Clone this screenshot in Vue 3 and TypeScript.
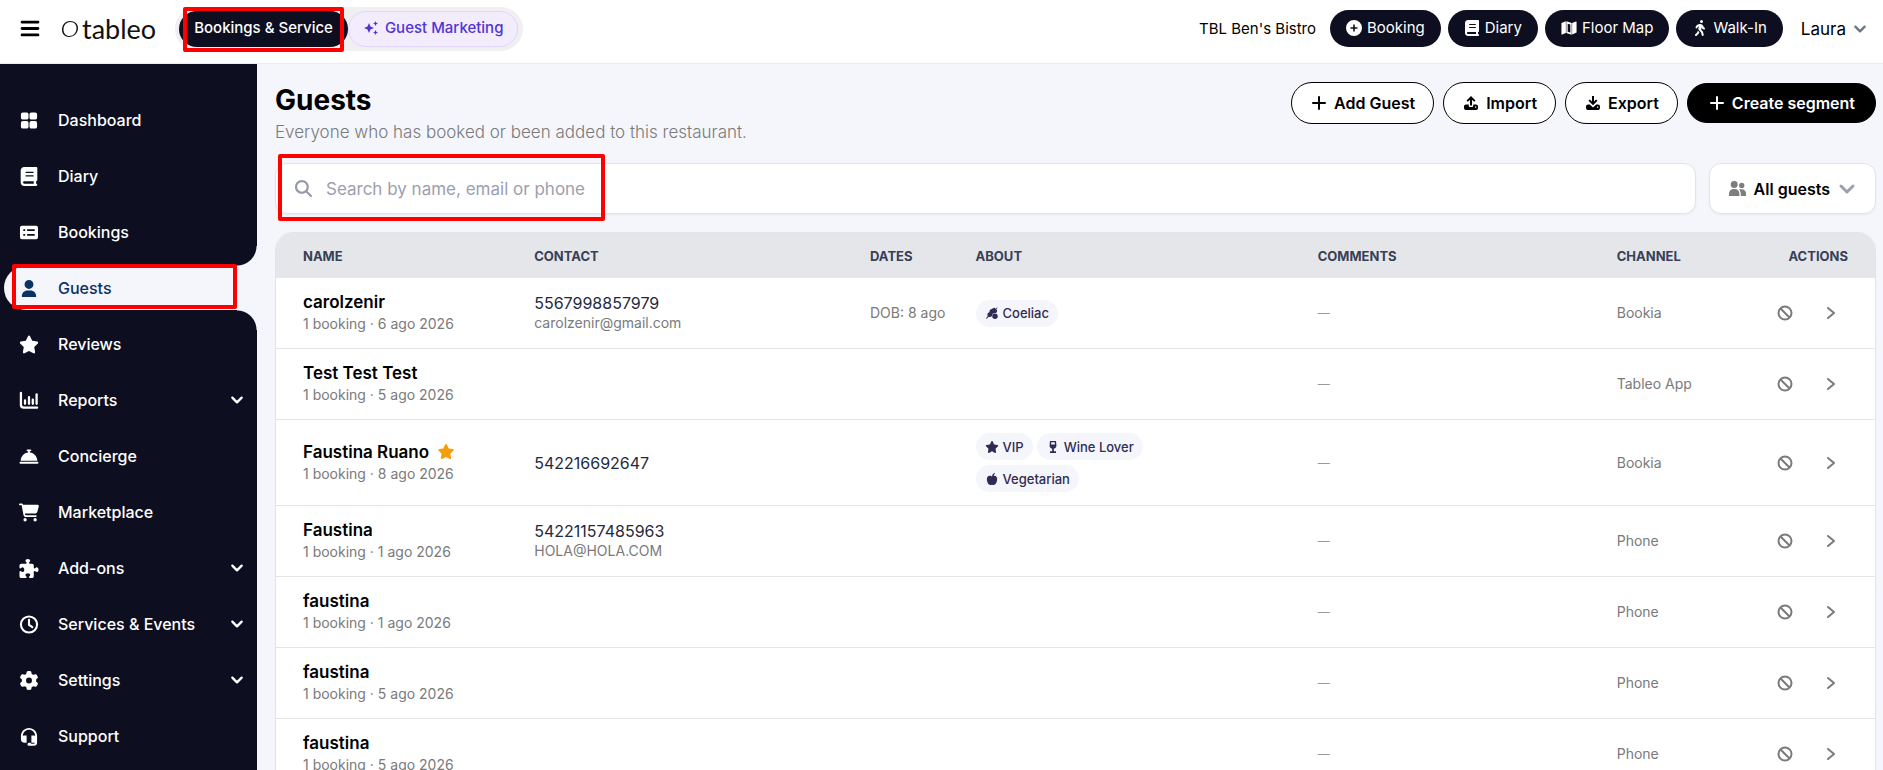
<script setup lang="ts">
import { h, ref, type FunctionalComponent } from 'vue'

interface Shape {
  box: string
  d: string
  stroke?: number
}

interface NavItem {
  label: string
  icon: string
  active?: boolean
  expandable?: boolean
}

interface Tag {
  label: string
  icon: string
}

interface Guest {
  name: string
  visit: string
  vip?: boolean
  phone?: string
  email?: string
  dates?: string
  tags?: Tag[]
  channel: string
}

const icons: Record<string, Shape> = {
  menu: { box: '0 0 18 16', d: 'M1.500 2h15M1.500 8h15M1.500 14h15', stroke: 2.6 },
  grid: {
    box: '0 0 20 20',
    d: 'M3.500 1.500h4a2 2 0 0 1 2 2v3.500a2 2 0 0 1-2 2h-4a2 2 0 0 1-2-2v-3.500a2 2 0 0 1 2-2zM12.500 1.500h4a2 2 0 0 1 2 2v3.500a2 2 0 0 1-2 2h-4a2 2 0 0 1-2-2v-3.500a2 2 0 0 1 2-2zM3.500 10.500h4a2 2 0 0 1 2 2v4a2 2 0 0 1-2 2h-4a2 2 0 0 1-2-2v-4a2 2 0 0 1 2-2zM12.500 10.500h4a2 2 0 0 1 2 2v4a2 2 0 0 1-2 2h-4a2 2 0 0 1-2-2v-4a2 2 0 0 1 2-2z',
  },
  book: {
    box: '0 0 448 512',
    d: 'M96 0C43 0 0 43 0 96V416c0 53 43 96 96 96H384h32c17.700 0 32-14.300 32-32s-14.300-32-32-32V384c17.700 0 32-14.300 32-32V32c0-17.700-14.300-32-32-32H384 96zm0 384H352v64H96c-17.700 0-32-14.300-32-32s14.300-32 32-32zm32-240c0-8.800 7.200-16 16-16H336c8.800 0 16 7.200 16 16s-7.200 16-16 16H144c-8.800 0-16-7.200-16-16zm16 80H336c8.800 0 16 7.200 16 16s-7.200 16-16 16H144c-8.800 0-16-7.200-16-16s7.200-16 16-16z',
  },
  list: {
    box: '0 0 20 20',
    d: 'M2.500 3h15a2 2 0 0 1 2 2v10a2 2 0 0 1-2 2h-15a2 2 0 0 1-2-2V5a2 2 0 0 1 2-2zM4 6.500v2h2v-2zM8 6.500v2h8v-2zM4 11.500v2h2v-2zM8 11.500v2h8v-2z',
  },
  user: { box: '0 0 20 20', d: 'M10 1a4.700 4.700 0 1 1 0 9.400a4.700 4.700 0 0 1 0-9.400zM2.500 19v-1c0-3.500 2.500-6 6-6h3c3.500 0 6 2.500 6 6v1z' },
  star: {
    box: '0 0 576 512',
    d: 'M316.900 18C311.600 7 300.400 0 288.100 0s-23.400 7-28.800 18L195 150.300 51.400 171.500c-12 1.800-22 10.200-25.700 21.700s-.7 24.200 7.900 32.700L137.800 329 113.200 474.700c-2 12 3 24.200 12.900 31.300s23 8 33.800 2.300l128.300-68.500 128.300 68.500c10.800 5.700 23.900 4.900 33.800-2.300s14.900-19.300 12.900-31.300L438.500 329 542.700 225.900c8.600-8.500 11.700-21.200 7.900-32.700s-13.700-19.900-25.700-21.700L381.200 150.300 316.900 18z',
  },
  chart: { box: '0 0 20 20', d: 'M1.500 2v12.500a3 3 0 0 0 3 3h14M5.800 13.500V10M10 13.500V6.500M14 13.500V9M18 13.500V3.500', stroke: 2.4 },
  bell: {
    box: '0 0 512 512',
    d: 'M216 64c-13.300 0-24 10.700-24 24s10.700 24 24 24h16v33.300C119.600 157.200 32 252.400 32 368H480c0-115.600-87.600-210.800-200-222.700V112h16c13.300 0 24-10.700 24-24s-10.700-24-24-24H216zM24 400c-13.300 0-24 10.700-24 24s10.700 24 24 24H488c13.300 0 24-10.700 24-24s-10.700-24-24-24H24z',
  },
  cart: {
    box: '0 0 576 512',
    d: 'M0 24C0 10.700 10.700 0 24 0H69.500c22 0 41.500 12.800 50.600 32h411c26.300 0 45.500 25 38.600 50.400l-41 152.300c-8.500 31.400-37 53.300-69.500 53.300H170.700l5.400 28.500c2.200 11.300 12.100 19.500 23.600 19.500H488c13.300 0 24 10.700 24 24s-10.700 24-24 24H199.700c-34.600 0-64.300-24.600-70.700-58.500L77.400 54.500c-.7-3.800-4-6.500-7.900-6.500H24C10.700 48 0 37.300 0 24zM128 464a48 48 0 1 1 96 0 48 48 0 1 1 -96 0zm336-48a48 48 0 1 1 0 96 48 48 0 1 1 0-96z',
  },
  puzzle: {
    box: '0 0 512 512',
    d: 'M192 104.800c0-9.200-5.800-17.300-13.200-22.800C167.200 73.300 160 61.300 160 48c0-26.500 28.700-48 64-48s64 21.500 64 48c0 13.300-7.200 25.300-18.800 34c-7.400 5.500-13.200 13.600-13.200 22.800c0 12.800 10.400 23.200 23.200 23.200H336c26.500 0 48 21.500 48 48v56.800c0 12.800 10.400 23.200 23.200 23.200c9.200 0 17.300-5.800 22.800-13.200c8.700-11.600 20.700-18.800 34-18.800c26.500 0 48 28.700 48 64s-21.500 64-48 64c-13.300 0-25.300-7.200-34-18.800c-5.500-7.400-13.600-13.200-22.800-13.200c-12.800 0-23.200 10.400-23.200 23.200V464c0 26.500-21.500 48-48 48H279.200c-12.800 0-23.200-10.400-23.200-23.200c0-9.200 5.800-17.300 13.200-22.800c11.600-8.700 18.800-20.700 18.800-34c0-26.500-28.700-48-64-48s-64 21.500-64 48c0 13.300 7.200 25.300 18.800 34c7.400 5.500 13.200 13.600 13.200 22.800c0 12.800-10.400 23.200-23.200 23.200H48c-26.500 0-48-21.500-48-48V343.200C0 330.400 10.400 320 23.200 320c9.200 0 17.300 5.800 22.800 13.200C54.700 344.800 66.700 352 80 352c26.500 0 48-28.700 48-64s-21.500-64-48-64c-13.300 0-25.300 7.200-34 18.800C40.500 250.200 32.400 256 23.200 256C10.400 256 0 245.600 0 232.800V176c0-26.500 21.500-48 48-48H168.800c12.800 0 23.200-10.400 23.200-23.200z',
  },
  clock: { box: '0 0 20 20', d: 'M10 1.500a8.500 8.500 0 1 1 0 17a8.500 8.500 0 0 1 0-17zM10 5v5.500l3.500 2.300', stroke: 2.2 },
  gear: {
    box: '0 0 512 512',
    d: 'M495.900 166.600c3.200 8.700 .5 18.400-6.400 24.600l-43.300 39.400c1.100 8.300 1.700 16.800 1.700 25.400s-.6 17.100-1.700 25.400l43.300 39.400c6.900 6.200 9.600 15.900 6.400 24.600c-4.400 11.900-9.700 23.300-15.800 34.300l-4.700 8.100c-6.600 11-14 21.400-22.100 31.200c-5.900 7.200-15.700 9.600-24.500 6.800l-55.700-17.700c-13.400 10.300-28.200 18.900-44 25.400l-12.500 57.100c-2 9.100-9 16.300-18.200 17.800c-13.800 2.300-28 3.500-42.500 3.500s-28.700-1.200-42.500-3.500c-9.200-1.500-16.200-8.700-18.200-17.800l-12.500-57.100c-15.800-6.500-30.600-15.100-44-25.400L83.100 425.900c-8.800 2.800-18.600 .3-24.500-6.800c-8.100-9.800-15.500-20.200-22.100-31.200l-4.700-8.100c-6.100-11-11.400-22.400-15.800-34.300c-3.200-8.700-.5-18.400 6.400-24.600l43.300-39.400C64.600 273.100 64 264.600 64 256s.6-17.100 1.700-25.400L22.400 191.200c-6.900-6.200-9.600-15.900-6.400-24.600c4.400-11.900 9.700-23.300 15.800-34.300l4.700-8.100c6.600-11 14-21.400 22.100-31.200c5.900-7.200 15.700-9.600 24.500-6.800l55.700 17.700c13.400-10.300 28.200-18.900 44-25.400l12.500-57.100c2-9.100 9-16.300 18.200-17.800C227.300 1.200 241.500 0 256 0s28.700 1.200 42.500 3.500c9.200 1.500 16.200 8.700 18.200 17.800l12.500 57.100c15.800 6.500 30.600 15.100 44 25.400l55.700-17.700c8.800-2.800 18.600-.3 24.500 6.800c8.100 9.800 15.500 20.200 22.100 31.200l4.700 8.100c6.100 11 11.400 22.400 15.800 34.300zM256 336a80 80 0 1 0 0-160 80 80 0 1 0 0 160z',
  },
  headset: {
    box: '0 0 20 20',
    d: 'M10 1C5.300 1 1.500 4.800 1.500 9.500v3A4 4 0 0 0 5.500 16.500h2V9h-2.500q-.8 0-1.500.3C3.600 5.800 6.500 3 10 3s6.400 2.800 6.500 6.300q-.7-.3-1.500-.3h-2.500v7.500h3.800a1.600 1.600 0 0 1-1.500 1h-2.500a1.300 1.300 0 0 0-1.300-1h-1a1.500 1.500 0 0 0 0 3.200h5a3.500 3.500 0 0 0 3.500-3.500V9.500C18.500 4.800 14.700 1 10 1z',
  },
  down: { box: '0 0 12 12', d: 'M2 4l4 4 4-4', stroke: 2 },
  right: { box: '0 0 12 16', d: 'M3 3l6 5-6 5', stroke: 2 },
  sparkles: {
    box: '0 0 16 16',
    d: 'M6 3l1.500 3.500L11 8 7.500 9.500 6 13 4.500 9.500 1 8l3.500-1.500zM12.500 1l.8 1.700L15 3.500l-1.700.8-.8 1.700-.8-1.700L10 3.500l1.700-.8zM12.500 10l.8 1.700 1.700.8-1.700.8-.8 1.700-.8-1.700-1.700-.8 1.700-.8z',
  },
  plusCircle: { box: '0 0 16 16', d: 'M8 0a8 8 0 1 1 0 16A8 8 0 0 1 8 0zM7.200 4.500v2.700H4.500v1.600h2.700v2.700h1.600V8.800h2.700V7.200H8.800V4.500z' },
  map: { box: '0 0 18 16', d: 'M.5 2.500L5.500.5V13.500L1.300 15.300a.6.600 0 0 1-.8-.6zM6 .5l6 2V15.500l-6-2zM12.500 2.500l4.200-1.800a.6.600 0 0 1 .8.600V13l-5 2.300zM7.500 3.200v9l3 1v-9z' },
  walk: {
    box: '0 0 320 512',
    d: 'M160 48a48 48 0 1 1 96 0 48 48 0 1 1 -96 0zM126.500 199.300c-1 .4-1.900 .8-2.900 1.200l-8 3.500c-16.400 7.300-29 21.200-34.700 38.200l-2.600 7.800c-5.600 16.800-23.700 25.800-40.500 20.200s-25.800-23.700-20.200-40.500l2.600-7.800c11.400-34.100 36.600-61.900 69.400-76.500l8-3.500c20.800-9.200 43.300-14 66.100-14c44.600 0 84.800 26.800 101.900 67.900L281 232.700l21.400 10.700c15.800 7.900 22.200 27.100 14.300 42.900s-27.100 22.200-42.900 14.300L247 287.300c-10.300-5.200-18.400-13.800-22.800-24.500l-9.600-23-19.300 65.500 49.500 54c5.400 5.900 9.200 13 11.200 20.800l23 92.100c4.300 17.100-6.100 34.500-23.300 38.800s-34.500-6.100-38.800-23.300l-22-88.100-70.700-77.100c-14.800-16.100-20.300-38.600-14.700-59.700l16.900-63.500zM68.700 398l25-62.400c2.100 3 4.500 5.800 7 8.600l40.700 44.400-14.500 36.200c-2.400 6-6 11.500-10.600 16.100L54.600 502.600c-12.500 12.500-32.800 12.500-45.300 0s-12.500-32.800 0-45.300L68.700 398z',
  },
  plus: { box: '0 0 14 14', d: 'M7 1v12M1 7h12', stroke: 2 },
  upload: { box: '0 0 14 14', d: 'M7 0l4.500 4.500-1.300 1.300L8 3.700V9.500H6V3.700L3.800 5.800 2.500 4.500zM2 8.500h2.800V10a1 1 0 0 0 1 1h2.400a1 1 0 0 0 1-1V8.500H12a2 2 0 0 1 2 2V12a2 2 0 0 1-2 2H2a2 2 0 0 1-2-2v-1.500a2 2 0 0 1 2-2zM11 10.500v1.300h1.300v-1.300z' },
  download: { box: '0 0 14 14', d: 'M6 0h2v5.500l2.200-2.100 1.300 1.300L7 9.300 2.500 4.700l1.300-1.300L6 5.500zM2 8.500h1.800L7 11.500l3.200-3H12a2 2 0 0 1 2 2V12a2 2 0 0 1-2 2H2a2 2 0 0 1-2-2v-1.500a2 2 0 0 1 2-2zM11 10.500v1.300h1.300v-1.300z' },
  search: {
    box: '0 0 512 512',
    d: 'M416 208c0 45.900-14.900 88.300-40 122.700L502.600 457.400c12.500 12.500 12.500 32.800 0 45.300s-32.800 12.500-45.300 0L330.700 376c-34.400 25.200-76.800 40-122.700 40C93.100 416 0 322.900 0 208S93.100 0 208 0S416 93.100 416 208zM208 352a144 144 0 1 0 0-288 144 144 0 1 0 0 288z',
  },
  users: { box: '0 0 18 16', d: 'M5.500 0a3.700 3.700 0 1 1 0 7.400a3.700 3.700 0 0 1 0-7.400zM13.500 2a2.800 2.800 0 1 1 0 5.600a2.800 2.800 0 0 1 0-5.600zM0 16v-2.500a5 5 0 0 1 5-5h1a5 5 0 0 1 5 5V16zM12.500 16v-2.500a6.500 6.500 0 0 0-2-4.700h3a4.500 4.500 0 0 1 4.500 4.500V16z' },
  ban: { box: '0 0 16 16', d: 'M8 1.500a6.500 6.500 0 1 1 0 13a6.500 6.500 0 0 1 0-13zM3.500 3.500l9 9', stroke: 2 },
  wheat: { box: '0 0 14 14', d: 'M0 13l2-2.500C1 8 2 6.500 4 6c-.2-2 1-3.500 3-3.700C8 1.500 9 1 10 1l1 1 2-1.500.5.500L12 3l1 1c0 1-.5 2.200-1.300 3h-1A3.600 3.600 0 0 0 7 10.500c-1 1.200-2.300 1.500-4 1L1 13.800zM10.500 7.500a3.200 3.200 0 1 1 0 6.400a3.200 3.200 0 0 1 0-6.400z' },
  wine: { box: '0 0 14 14', d: 'M3.500 0h7l.5 5a4 4 0 0 1-3 4v3h2.500v2h-7v-2H6V9a4 4 0 0 1-3-4zM5 1.500L4.800 4h4.400L9 1.500z' },
  apple: { box: '0 0 14 14', d: 'M7 4c.3-2 1.200-3.300 3-4l.5.800C9.500 1.500 9 2.500 8.800 3.300 11.500 2.500 13 4.500 13 7c0 3.500-2 7-4 7-.8 0-1.200-.4-2-.4s-1.200.4-2 .4c-2 0-4-3.500-4-7 0-2.800 2-4.500 4-3.700.7.200 1.500.7 2 .7z' },
}

const nav: NavItem[] = [
  { label: 'Dashboard', icon: 'grid' },
  { label: 'Diary', icon: 'book' },
  { label: 'Bookings', icon: 'list' },
  { label: 'Guests', icon: 'user', active: true },
  { label: 'Reviews', icon: 'star' },
  { label: 'Reports', icon: 'chart', expandable: true },
  { label: 'Concierge', icon: 'bell' },
  { label: 'Marketplace', icon: 'cart' },
  { label: 'Add-ons', icon: 'puzzle', expandable: true },
  { label: 'Services & Events', icon: 'clock', expandable: true },
  { label: 'Settings', icon: 'gear', expandable: true },
  { label: 'Support', icon: 'headset' },
]

const quickActions = [
  { label: 'Booking', icon: 'plusCircle' },
  { label: 'Diary', icon: 'book' },
  { label: 'Floor Map', icon: 'map' },
  { label: 'Walk-In', icon: 'walk' },
]

const pageActions = [
  { label: 'Add Guest', icon: 'plus' },
  { label: 'Import', icon: 'upload' },
  { label: 'Export', icon: 'download' },
  { label: 'Create segment', icon: 'plus', primary: true },
]

const columns = ['Name', 'Contact', 'Dates', 'About', 'Comments', 'Channel', 'Actions']

const guests: Guest[] = [
  {
    name: 'carolzenir',
    visit: '1 booking · 6 ago 2026',
    phone: '5567998857979',
    email: 'carolzenir@gmail.com',
    dates: 'DOB: 8 ago',
    tags: [{ label: 'Coeliac', icon: 'wheat' }],
    channel: 'Bookia',
  },
  { name: 'Test Test Test', visit: '1 booking · 5 ago 2026', channel: 'Tableo App' },
  {
    name: 'Faustina Ruano',
    visit: '1 booking · 8 ago 2026',
    vip: true,
    phone: '542216692647',
    tags: [
      { label: 'VIP', icon: 'star' },
      { label: 'Wine Lover', icon: 'wine' },
      { label: 'Vegetarian', icon: 'apple' },
    ],
    channel: 'Bookia',
  },
  { name: 'Faustina', visit: '1 booking · 1 ago 2026', phone: '54221157485963', email: 'HOLA@HOLA.COM', channel: 'Phone' },
  { name: 'faustina', visit: '1 booking · 1 ago 2026', channel: 'Phone' },
  { name: 'faustina', visit: '1 booking · 5 ago 2026', channel: 'Phone' },
  { name: 'faustina', visit: '1 booking · 5 ago 2026', channel: 'Phone' },
]

const query = ref('')

// Small functional component so every icon shares one rendering path.
const Icon: FunctionalComponent<{ name: string }> = (props) => {
  const icon = icons[props.name]
  return h('svg', { viewBox: icon.box, 'aria-hidden': 'true' }, [
    h('path', {
      d: icon.d,
      fill: icon.stroke ? 'none' : 'currentColor',
      'fill-rule': 'evenodd',
      stroke: icon.stroke ? 'currentColor' : 'none',
      'stroke-width': icon.stroke,
      'stroke-linecap': 'round',
      'stroke-linejoin': 'round',
    }),
  ])
}
Icon.props = ['name']
</script>

<template>
  <div class="app">
    <header class="topbar">
      <button class="menu" type="button" aria-label="Menu"><Icon name="menu" class="menu-icon" /></button>
      <a class="logo" href="#">
        <svg class="logo-ring" viewBox="0 0 18 18" aria-hidden="true">
          <path d="M9 1C4 1 1 5 1 10c0 4 3 7 7 7 5 0 9-4 9-9 0-4-3-7-8-7zM9.500 2C13.500 2 15.500 5 15.500 8c0 4.500-3 8-7 8-3.500 0-6-2.500-6-6.500C2.500 5 5.500 2 9.500 2z" fill="#111" fill-rule="evenodd" />
        </svg>
        <span>tableo</span>
      </a>
      <nav class="modes" aria-label="Workspace">
        <button class="mode mode-on" type="button">Bookings &amp; Service<span class="mark mark-mode"></span></button>
        <button class="mode mode-alt" type="button"><Icon name="sparkles" class="i16" />Guest Marketing</button>
      </nav>
      <div class="top-right">
        <span class="venue">TBL Ben's Bistro</span>
        <button v-for="a in quickActions" :key="a.label" class="quick" type="button">
          <Icon :name="a.icon" class="i16" />{{ a.label }}
        </button>
        <button class="account" type="button">Laura<Icon name="down" class="i14" /></button>
      </div>
    </header>

    <div class="body">
      <aside class="sidebar">
        <nav aria-label="Main">
          <a v-for="item in nav" :key="item.label" href="#" class="nav-item" :class="{ active: item.active }">
            <Icon :name="item.icon" class="nav-icon" />
            <span class="nav-label">{{ item.label }}</span>
            <Icon v-if="item.expandable" name="down" class="i14" />
            <span v-if="item.active" class="mark mark-nav"></span>
          </a>
        </nav>
      </aside>

      <main class="main">
        <div class="page-head">
          <div>
            <h1>Guests</h1>
            <p class="lead">Everyone who has booked or been added to this restaurant.</p>
          </div>
          <div class="page-actions">
            <button v-for="a in pageActions" :key="a.label" type="button" class="btn" :class="{ primary: a.primary }">
              <Icon :name="a.icon" class="i14" />{{ a.label }}
            </button>
          </div>
        </div>

        <div class="filters">
          <label class="search">
            <Icon name="search" class="search-icon" />
            <input v-model="query" type="text" aria-label="Search guests" placeholder="Search by name, email or phone" />
            <span class="mark mark-search"></span>
          </label>
          <button class="segment" type="button">
            <Icon name="users" class="segment-icon" />All guests<Icon name="down" class="segment-chevron" />
          </button>
        </div>

        <div class="card">
          <table>
            <thead>
              <tr>
                <th v-for="c in columns" :key="c" scope="col" :class="'col-' + c.toLowerCase()">{{ c }}</th>
              </tr>
            </thead>
            <tbody>
              <tr v-for="(g, i) in guests" :key="i">
                <td>
                  <div class="name">{{ g.name }}<Icon v-if="g.vip" name="star" class="vip" /></div>
                  <div class="visit">{{ g.visit }}</div>
                </td>
                <td>
                  <div v-if="g.phone" class="phone">{{ g.phone }}</div>
                  <div v-if="g.email" class="email">{{ g.email }}</div>
                </td>
                <td>{{ g.dates }}</td>
                <td>
                  <div v-if="g.tags" class="tags">
                    <span v-for="t in g.tags" :key="t.label" class="tag"><Icon :name="t.icon" class="tag-icon" />{{ t.label }}</span>
                  </div>
                </td>
                <td class="dash">—</td>
                <td>{{ g.channel }}</td>
                <td>
                  <div class="row-actions">
                    <button type="button" aria-label="Block guest"><Icon name="ban" class="i16" /></button>
                    <button type="button" aria-label="Open guest"><Icon name="right" class="i16" /></button>
                  </div>
                </td>
              </tr>
            </tbody>
          </table>
        </div>
      </main>
    </div>
  </div>
</template>

<style>
body {
  margin: 0;
}
</style>

<style scoped>
.app {
  --ink: #0d0e20;
  --page: #f4f6fc;
  --line: #e2e4e8;
  --muted: #7a7a7a;
  display: flex;
  flex-direction: column;
  height: 100vh;
  overflow: hidden;
  background: var(--page);
  color: #000;
  font-family: Inter, 'Liberation Sans', sans-serif;
  font-size: 16px;
}

button {
  display: flex;
  align-items: center;
  margin: 0;
  padding: 0;
  border: 0;
  background: none;
  color: inherit;
  font: inherit;
  white-space: nowrap;
  cursor: pointer;
}

a {
  color: inherit;
  text-decoration: none;
}

svg {
  display: block;
  flex: none;
}

.i14 {
  width: 14px;
  height: 14px;
}

.i16 {
  width: 16px;
  height: 16px;
}

/* Callout frames laid over the highlighted controls */
.mark {
  position: absolute;
  border: 4px solid #f00;
  border-radius: 2px;
  pointer-events: none;
}

.mark-mode {
  inset: -4px 4px -5px;
}

.mark-nav {
  inset: -2px 20px 1px 8px;
}

.mark-search {
  top: -10px;
  bottom: -8px;
  left: 2px;
  width: 319px;
}

.topbar {
  display: flex;
  flex: none;
  align-items: center;
  box-sizing: border-box;
  height: 64px;
  padding: 0 16px 6px 20px;
  border-bottom: 1px solid #ececee;
  background: #fff;
  font-size: 15px;
}

.menu-icon {
  width: 20px;
  height: 17px;
}

.logo {
  display: flex;
  align-items: center;
  gap: 3px;
  margin-left: 21px;
  color: #111;
  font-family: Lato, sans-serif;
  font-size: 27px;
  line-height: 32px;
}

.logo-ring {
  width: 18px;
  height: 18px;
}

.modes {
  display: flex;
  align-items: center;
  margin-left: 19px;
  padding: 4px 5px 4px 4px;
  border-radius: 22px;
  background: #f0f0f3;
}

.mode {
  position: relative;
  box-sizing: border-box;
  height: 36px;
  padding: 0 15px 2px;
  border-radius: 18px;
  font-weight: 500;
}

.mode-on {
  background: var(--ink);
  color: #fff;
}

.mode-alt {
  gap: 6px;
  padding: 0 14px 2px;
  border: 1px solid #e0d5fb;
  background: #f3ecfd;
  color: #4f35d5;
}

.top-right {
  display: flex;
  align-items: center;
  gap: 7px;
  margin-left: auto;
}

.venue {
  margin-right: 7px;
}

.quick {
  box-sizing: border-box;
  gap: 5px;
  height: 37px;
  padding: 0 16px 2px;
  border-radius: 19px;
  background: var(--ink);
  color: #fff;
}

.account {
  gap: 7px;
  margin-left: 11px;
  font-size: 17px;
}

.account svg {
  color: #6f7784;
}

.body {
  display: flex;
  flex: 1;
  min-height: 0;
}

.sidebar {
  flex: none;
  box-sizing: border-box;
  width: 257px;
  padding: 34px 0 0 4px;
  background: var(--ink);
  color: #fff;
}

.nav-item {
  position: relative;
  display: flex;
  align-items: center;
  gap: 19px;
  height: 44px;
  margin-bottom: 12px;
  padding: 0 13px 0 15px;
  font-weight: 500;
}

.nav-icon {
  width: 20px;
  height: 19px;
}

.nav-label {
  flex: 1;
}

.nav-item.active {
  border-radius: 22px 0 0 22px;
  background: var(--page);
  color: #0a3265;
}

.nav-item.active::before,
.nav-item.active::after {
  position: absolute;
  right: 0;
  width: 20px;
  height: 20px;
  content: '';
}

.nav-item.active::before {
  bottom: 100%;
  background: radial-gradient(circle at 0 0, var(--ink) 19px, var(--page) 20px);
}

.nav-item.active::after {
  top: 100%;
  background: radial-gradient(circle at 0 100%, var(--ink) 19px, var(--page) 20px);
}

.main {
  flex: 1;
  min-width: 0;
  padding: 18px 7px 0 18px;
  overflow-y: auto;
  scrollbar-width: none;
}

.page-head {
  display: flex;
  justify-content: space-between;
}

h1 {
  margin: 0;
  font-size: 28px;
  font-weight: 700;
  line-height: 36px;
}

.lead {
  margin: 1px 0 0;
  color: var(--muted);
  font-size: 17px;
  font-weight: 300;
  line-height: 26px;
}

.page-actions {
  display: flex;
  align-items: center;
  gap: 9px;
  height: 42px;
}

.btn {
  box-sizing: border-box;
  gap: 8px;
  height: 42px;
  padding: 0 18px 0 20px;
  border: 1px solid #000;
  border-radius: 21px;
  background: #fff;
  font-weight: 600;
}

.btn.primary {
  height: 40px;
  padding: 0 20px 0 22px;
  background: #000;
  color: #fff;
}

.filters {
  display: flex;
  gap: 13px;
  margin-top: 18px;
}

.search,
.segment {
  position: relative;
  box-sizing: border-box;
  height: 51px;
  border: 1px solid var(--line);
  border-radius: 12px;
  background: #fff;
  box-shadow: 0 1px 2px rgba(0, 0, 0, 0.05);
}

.search {
  display: flex;
  flex: 1;
  align-items: center;
  gap: 14px;
  padding: 0 19px;
}

.search-icon {
  width: 17px;
  height: 17px;
  color: #9499a8;
}

.search input {
  flex: 1;
  min-width: 0;
  padding: 0;
  border: 0;
  outline: 0;
  background: none;
  color: #000;
  font: inherit;
  font-size: 17px;
}

.search input::placeholder {
  color: #9ca0ae;
  opacity: 1;
}

.segment {
  gap: 8px;
  padding: 0 19px;
  font-weight: 600;
}

.segment-icon {
  width: 17px;
  height: 17px;
  color: #7d7d7d;
}

.segment-chevron {
  width: 18px;
  height: 18px;
  color: #9ca0ae;
}

.card {
  margin-top: 18px;
  overflow: hidden;
  border: 1px solid var(--line);
  border-radius: 18px 18px 0 0;
  background: #fff;
}

table {
  width: 100%;
  border-spacing: 0;
  table-layout: fixed;
}

th {
  box-sizing: border-box;
  height: 45px;
  padding: 0 0 0 12px;
  background: #e5e6ea;
  color: #374056;
  font-size: 13px;
  font-weight: 700;
  line-height: 20px;
  text-align: left;
  text-transform: uppercase;
}

th:first-child,
td:first-child {
  padding-left: 27px;
}

.col-name {
  width: 15.4%;
}

.col-contact {
  width: 21%;
}

.col-dates {
  width: 6.6%;
}

.col-about {
  width: 21.4%;
}

.col-comments {
  width: 18.7%;
}

.col-channel {
  width: 8.9%;
}

.col-actions {
  padding-right: 27px;
  text-align: right;
}

td {
  box-sizing: border-box;
  height: 71px;
  padding: 0 0 0 12px;
  border-bottom: 1px solid var(--line);
  color: var(--muted);
  font-size: 14px;
  line-height: 20px;
  white-space: nowrap;
}

.name {
  display: flex;
  align-items: center;
  gap: 8px;
  color: #000;
  font-size: 17px;
  font-weight: 600;
  line-height: 22px;
}

.visit {
  line-height: 22px;
}

.vip {
  width: 18px;
  height: 15px;
  color: #f59e0b;
}

.phone {
  color: #1f2a3c;
  font-size: 16px;
}

.tags {
  display: flex;
  flex-wrap: wrap;
  gap: 5px 4px;
  max-width: 220px;
  padding: 13px 0;
}

.tag {
  display: flex;
  align-items: center;
  gap: 4px;
  height: 27px;
  padding: 0 9px;
  border-radius: 14px;
  background: #f5f6fb;
  color: #2f2b55;
  font-size: 13px;
  font-weight: 500;
}

.tag-icon {
  width: 14px;
  height: 12px;
}

.dash {
  color: #9a9a9a;
  font-size: 12px;
}

.row-actions {
  display: flex;
  justify-content: flex-end;
  gap: 30px;
  padding-right: 36px;
}
</style>
